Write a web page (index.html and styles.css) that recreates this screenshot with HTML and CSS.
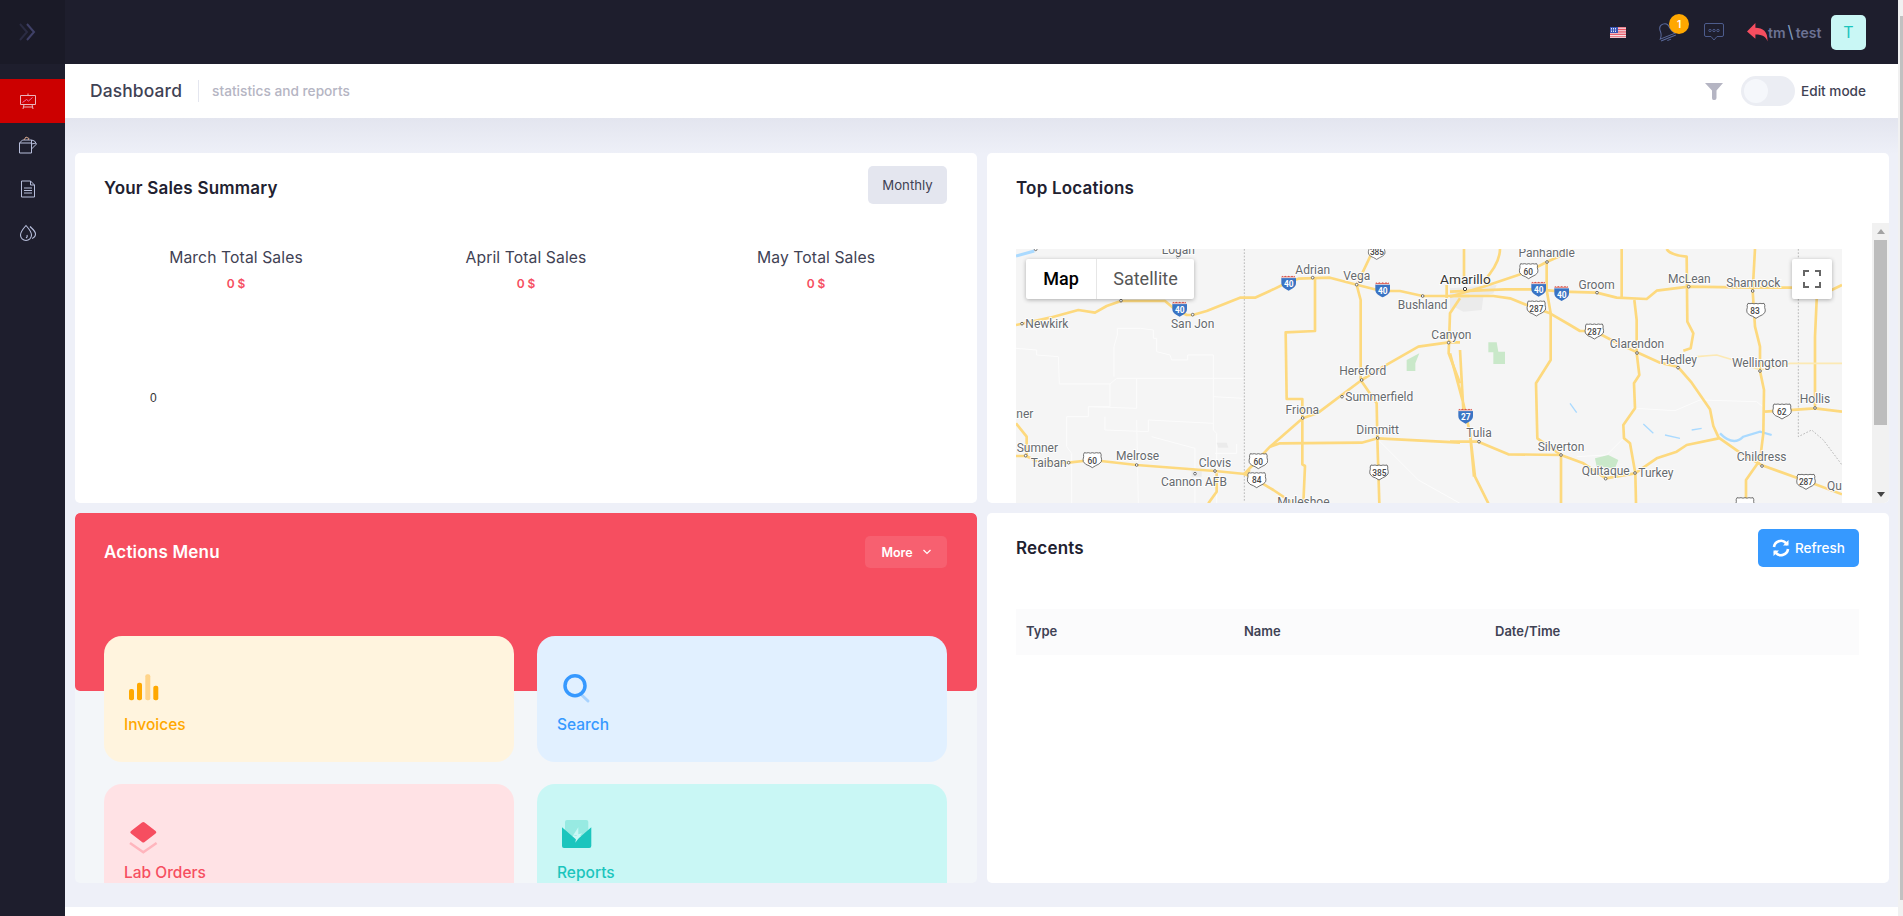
FILE: index.html
```html
<!DOCTYPE html>
<html lang="en">
<head>
	<meta charset="UTF-8">
	<meta name="viewport" content="width=device-width">
	<title>Dashboard</title>
	<link rel="stylesheet" href="styles.css">
</head>
<body>
<aside class="side">
	<div class="brand">
		<svg width="18" height="18" viewBox="0 0 18 18" fill="none" stroke-width="2">
			<path d="M1 1l7 8-7 8" stroke="#2a2b42"/>
			<path d="M8 1l7 8-7 8" stroke="#3f4067"/>
		</svg>
	</div>
	<nav class="nav">
		<a class="nav-item active">
			<svg width="18" height="18" viewBox="0 0 18 18" fill="none" stroke="#eab4bb">
				<path d="M1.5 3.5h15v9h-15zM9 3.5v-2M5 12.5l-1 4.5M13 12.5l1 4.500M4.500 15h9"/>
				<path d="M3.5 10.500l4-3 2 1.500 4-3.500" stroke="#f06aa8"/>
			</svg>
		</a>
		<a class="nav-item">
			<svg width="18" height="18" viewBox="0 0 18 18" fill="none" stroke="#b7bedb">
				<path d="M.5 7h12v10H.5zM.5 7l3-3h9v3M12.5 8l4.500-1M12.500 13l5-5-2-3-3-1"/>
				<path d="M5 4l2-3 3 1.500L9 4" stroke="#d8a98f"/>
			</svg>
		</a>
		<a class="nav-item">
			<svg width="16" height="18" viewBox="0 0 16 18" fill="none" stroke="#b7bedb">
				<path d="M1.500 1h9l4 4v12h-13zM10.500 1v4h4M4 8h8M4 10.500h8M4 13h8"/>
			</svg>
		</a>
		<a class="nav-item">
			<svg width="18" height="18" viewBox="0 0 18 18" fill="none" stroke="#b7bedb" stroke-width="1.100">
				<path d="M7 1.500c3 3.500 5.500 6 5.500 9.500a5.500 5.500 0 0 1-11 0c0-3.500 2.500-6 5.500-9.500z"/>
				<path d="M11 2.500c2.500 2.500 5.500 4.500 5.500 7.500 0 2-1.200 3.600-3.400 4.500M7 14c1-.5 1.500-1.500 1-3"/>
			</svg>
		</a>
	</nav>
</aside>

<div class="main">
	<header class="top">
		<svg class="flag" width="16" height="11" viewBox="0 0 16 11">
			<rect width="16" height="11" fill="#f4f4f8"/>
			<path d="M0 .8h16M0 2.500h16M0 4.200h16M0 5.900h16M0 7.600h16M0 9.800h16" stroke="#e8404f" stroke-width=".9"/>
			<rect width="8" height="6" fill="#3a55b4"/>
			<path d="M1 1.500h6M1 3h6M1 4.500h6" stroke="#dfe4f6" stroke-dasharray="1 1"/>
		</svg>
		<div class="bell">
			<svg width="20" height="20" viewBox="0 0 20 20" fill="none" stroke="#5a6a9c">
				<g transform="rotate(-22 10 10)">
					<path d="M10 1.500c-3.500 0-5 2.500-5 6 0 4-1.500 5.500-3 7h16c-1.500-1.500-3-3-3-7 0-3.500-1.500-6-5-6z"/>
					<path d="M2 16.500h16M8 18.500h4"/>
				</g>
			</svg>
			<span class="badge">1</span>
		</div>
		<svg class="chat" width="20" height="18" viewBox="0 0 20 18" fill="none" stroke="#4d5c8c">
			<path d="M2 .5h16a1.500 1.500 0 0 1 1.500 1.500v10a1.500 1.500 0 0 1-1.500 1.500h-5l-3 3.500-3-3.500H2A1.500 1.500 0 0 1 .5 12V2A1.500 1.500 0 0 1 2 .5z"/>
			<circle cx="6" cy="7.500" r="1.200"/><circle cx="10" cy="7.500" r="1.200"/><circle cx="14" cy="7.500" r="1.200"/>
		</svg>
		<svg class="reply" width="21" height="19" viewBox="0 0 20 18">
			<path d="M0 8l8-8v4.500c7 0 12 3.500 11.500 13-1.200-4-4.500-6.500-11.500-6.500V15z" fill="#f64e60"/>
		</svg>
		<span class="user">tm<i>\</i>test</span>
		<span class="avatar">T</span>
	</header>

	<div class="sub">
		<span class="sub-title">Dashboard</span>
		<span class="sub-note">statistics and reports</span>
		<svg class="funnel" width="18" height="17" viewBox="0 0 18 17"><path d="M0 0h18l-6.500 7.500V15q0 2-2 2h-1q-1.500 0-1.500-2V7.500z" fill="#b5b5c3"/></svg>
		<span class="switch"><i></i></span>
		<span class="edit">Edit mode</span>
	</div>

	<div class="content">
		<section class="card sales">
			<div class="card-head">
				<h3>Your Sales Summary</h3>
				<button class="btn-grey">Monthly</button>
			</div>
			<div class="stats">
				<div><p>March Total Sales</p><b>0 $</b></div>
				<div><p>April Total Sales</p><b>0 $</b></div>
				<div><p>May Total Sales</p><b>0 $</b></div>
			</div>
			<div class="axis">0</div>
		</section>

		<section class="card locations">
			<div class="card-head"><h3>Top Locations</h3></div>
			<div class="map-scroll">
				<div class="map-wrap">
					<div class="map">
						<svg class="map-svg" width="826" height="254" viewBox="18 87 2478 762">
							<defs>
								<symbol id="i-shield" viewBox="0 0 46 48" overflow="visible">
									<path d="M1 8h44v16c0 12-12 18-22 23C13 42 1 36 1 24z" fill="#3a74c4"/>
									<path d="M1 8l2-6 5 3 5-3 5 3 5-3 5 3 5-3 5 3 3-3 2 6z" fill="#d9544a"/>
									<path d="M1 8h44" stroke="#fff" stroke-width="2"/>
								</symbol>
								<symbol id="us-shield" viewBox="0 0 60 50" overflow="visible">
									<path d="M6 3q6 2 12 0 6 3 12 0 6 3 12 0 6 2 12 0 4 6 2 12 3 8 1 15-6 8-17 12l-10 6-10-6Q9 40 3 30q-2-7 1-15-2-6 2-12z" fill="#fff" stroke="#555" stroke-width="2.500"/>
								</symbol>
							</defs>
							<rect x="18" y="87" width="2478" height="762" fill="#f5f5f5"/>

							<g fill="none" stroke="#fcfcfc" stroke-width="3">
								<path d="M18 385l62 5v15l65 5 3 82h152l20-17h380M312 470v-90l10-35v-20h70l38 5v25h10v40l40 10 5 15h48v-15h77v70M610 530l90 5M610 475v155l10 10v210M300 492v68h-65v30h-65v90l15 20v150M235 560l145 5v-90M285 590v40l130 5v-35l195 10M380 600l5 250M425 650l130 35v165M680 672v28h-65M1105 660l120 120 125 70"/>
								<path d="M1875 565l120 7 75-32 170 5 25 20M1840 655l-50 50-90 5"/>
							</g>

							<g fill="#ebebeb">
								<path d="M1320 205l140-10-10 25-30 10-5 40-55 5-25-13-15 8z"/>
								<path d="M620 668h30l5 15h-30zM545 750h30v20h-30z"/>
							</g>
							<g fill="#c9e8c9">
								<path d="M1190 420l38-20-12 30v23h-26z"/>
								<path d="M1435 367h25l5 28h20v37h-35v-35h-15z"/>
								<path d="M1755 715l40-10 30 15-10 25-55-5z"/>
							</g>
							<g fill="none" stroke="#aadaff" stroke-width="4">
								<path d="M18 108l55-15" stroke-width="9"/>
								<path d="M2130 640q40 40 70 10l50-15 35 10" stroke-width="7"/>
								<path d="M1900 612l30 28M1965 645l45 10M2045 630l30-5M1680 550l20 28"/>
							</g>
							<path d="M703 87v760" fill="none" stroke="#999" stroke-width="2" stroke-dasharray="5 5"/>
							<path d="M2365 87v563l40-20 35 30 56 75" fill="none" stroke="#999" stroke-width="2" stroke-dasharray="5 5"/>

							<g fill="none" stroke="#fdd97e" stroke-width="8" stroke-linejoin="round">
								<path d="M18 315l102-22 85-23 50 8 35-20 43-15h132l25 21 40 21h18l42-12 100-40h45l55-25 45-22 30-10 95-3 80 21 75 19h55l68 15h140"/>
								<path d="M1085 100l-45 95 12 45v240l48 70 2 105 6 195"/>
								<path d="M915 172v161l-88 4 3 200h47v196l8 5-5 112"/>
								<path d="M700 765l80-85 98-85 47-17 130-98 65-40 105-60 91-13h34"/>
								<path d="M780 680l30-10 245-2 48-13 247 13"/>
								<path d="M18 708h30l42 20h85l71-8 134 15 235 18 90 9 15-12"/>
								<path d="M705 762l35 18 50 30 60 40"/>
								<path d="M18 610l32 40v58M620 760v55l-25 35M1350 235l-30 45-4 120 34 90M1310 195v40"/>
							</g>
							<g fill="none" stroke="#fdd97e" stroke-width="8" stroke-linejoin="round" transform="translate(1320 0)">
								<path d="M0 215l165-7h100l70 7 105 3 60 15 90 4 30-25 96-12 192 3h118l119 7 31-15"/>
								<path d="M0 228h130l50 7 50 20 70 25 60 35 30 18h43l57 30 71 34 69 31 54 13 41 47 55 80 10 50 16 35 64 45 66 38 104 37 30 10 106 40"/>
								<path d="M42 87v93M150 87q0 43-50 98M370 90l-80 36-55 29-135 45-100 30"/>
								<path d="M290 126v84l12 70v140l-44 70 4 165 71 50v145"/>
								<path d="M515 87v148M650 87q10 18 60 23l2 195 18 35-8 45-22 7"/>
								<path d="M915 87l-7 126 7 107 15 60v73l12 57-2 130-10 80-42 60v60"/>
								<path d="M553 240l7 60v99l8 66-16 25 3 75-35 50 2 40 18 15 16 90 2 90"/>
								<path d="M0 665h85l90 38 158 2 67 25 67 45 88-15 65-45 60-20 30-20 96-20"/>
								<path d="M945 575l150-10 81 10M1095 565V350l5-110v-40"/>
								<path d="M0 400l40 150 20 90 15 130 40 80M30 390l10 180M60 640l12 130"/>
								<path d="M740 410l60-5 50 15 80 30 90-20h156" stroke="#fce9b4" stroke-width="5"/>
							</g>

							<g class="shields">
								<use href="#i-shield" x="813" y="165" width="46" height="48"/>
								<use href="#i-shield" x="1095" y="185" width="46" height="48"/>
								<use href="#i-shield" x="486" y="243" width="46" height="48"/>
								<use href="#i-shield" x="1563" y="183" width="46" height="48"/>
								<use href="#i-shield" x="1632" y="196" width="46" height="48"/>
								<use href="#i-shield" x="1344" y="564" width="46" height="48"/>
								<text class="i-num" x="836" y="202">40</text>
								<text class="i-num" x="1118" y="222">40</text>
								<text class="i-num" x="509" y="280">40</text>
								<text class="i-num" x="1586" y="220">40</text>
								<text class="i-num" x="1655" y="233">40</text>
								<text class="i-num" x="1367" y="601">27</text>

								<use href="#us-shield" x="217" y="695" width="60" height="50"/>
								<use href="#us-shield" x="715" y="698" width="60" height="50"/>
								<use href="#us-shield" x="710" y="755" width="60" height="50"/>
								<use href="#us-shield" x="1077" y="732" width="60" height="50"/>
								<use href="#us-shield" x="1070" y="75" width="60" height="45"/>
								<use href="#us-shield" x="1526" y="128" width="60" height="50"/>
								<use href="#us-shield" x="1549" y="240" width="60" height="50"/>
								<use href="#us-shield" x="1723" y="309" width="60" height="50"/>
								<use href="#us-shield" x="2208" y="247" width="60" height="50"/>
								<use href="#us-shield" x="2286" y="549" width="60" height="50"/>
								<use href="#us-shield" x="2358" y="760" width="60" height="50"/>
								<use href="#us-shield" x="2175" y="830" width="60" height="50"/>
								<text class="us-num" x="247" y="731">60</text>
								<text class="us-num" x="745" y="734">60</text>
								<text class="us-num" x="740" y="790">84</text>
								<text class="us-num" x="1108" y="768">385</text>
								<text class="us-num" x="1101" y="106">385</text>
								<text class="us-num" x="1555" y="164">60</text>
								<text class="us-num" x="1579" y="276">287</text>
								<text class="us-num" x="1753" y="345">287</text>
								<text class="us-num" x="2235" y="283">83</text>
								<text class="us-num" x="2315" y="585">62</text>
								<text class="us-num" x="2388" y="796">287</text>
							</g>

							<g fill="#fff" stroke="#555" stroke-width="2.500">
								<circle cx="77" cy="88" r="4"/><circle cx="503" cy="110" r="4"/><circle cx="36" cy="311" r="4"/>
								<circle cx="333" cy="242" r="4"/><circle cx="548" cy="284" r="4"/><circle cx="908" cy="173" r="4"/>
								<circle cx="1040" cy="194" r="4"/><circle cx="1238" cy="228" r="4"/><circle cx="1316" cy="368" r="4"/>
								<circle cx="1055" cy="480" r="4"/><circle cx="996" cy="530" r="4"/><circle cx="878" cy="594" r="4"/>
								<circle cx="1103" cy="654" r="4"/><circle cx="47" cy="707" r="4"/><circle cx="176" cy="728" r="4"/>
								<circle cx="380" cy="735" r="4"/><circle cx="615" cy="753" r="4"/><circle cx="555" cy="761" r="4"/>
								<circle cx="1365" cy="207" r="5" stroke="#222"/><circle cx="1611" cy="126" r="4"/><circle cx="1761" cy="218" r="4"/>
								<circle cx="2036" cy="200" r="4"/><circle cx="2228" cy="213" r="4"/><circle cx="1881" cy="399" r="4"/>
								<circle cx="2004" cy="443" r="4"/><circle cx="2250" cy="453" r="4"/><circle cx="2415" cy="564" r="4"/>
								<circle cx="1407" cy="665" r="4"/><circle cx="1653" cy="705" r="4"/><circle cx="1787" cy="776" r="4"/>
								<circle cx="1875" cy="759" r="4"/><circle cx="2256" cy="738" r="4"/>
							</g>

							<g class="lbl" transform="translate(0 3)">
								<text x="505" y="100" text-anchor="middle">Logan</text>
								<text x="46" y="322">Newkirk</text>
								<text x="548" y="320" text-anchor="middle">San Jon</text>
								<text x="908" y="158" text-anchor="middle">Adrian</text>
								<text x="1040" y="178" text-anchor="middle">Vega</text>
								<text x="1238" y="265" text-anchor="middle">Bushland</text>
								<text x="1264" y="355">Canyon</text>
								<text x="1058" y="463" text-anchor="middle">Hereford</text>
								<text x="1006" y="540">Summerfield</text>
								<text x="877" y="580" text-anchor="middle">Friona</text>
								<text x="1103" y="640" text-anchor="middle">Dimmitt</text>
								<text x="70" y="592" text-anchor="end">Tanner</text>
								<text x="82" y="692" text-anchor="middle">Sumner</text>
								<text x="116" y="739" text-anchor="middle">Taiban</text>
								<text x="383" y="718" text-anchor="middle">Melrose</text>
								<text x="615" y="737" text-anchor="middle">Clovis</text>
								<text x="552" y="796" text-anchor="middle">Cannon AFB</text>
								<text x="880" y="855" text-anchor="middle">Muleshoe</text>
								<text x="1610" y="109" text-anchor="middle">Panhandle</text>
								<text x="1760" y="205" text-anchor="middle">Groom</text>
								<text x="2038" y="187" text-anchor="middle">McLean</text>
								<text x="2230" y="198" text-anchor="middle">Shamrock</text>
								<text x="1881" y="382" text-anchor="middle">Clarendon</text>
								<text x="2006" y="430" text-anchor="middle">Hedley</text>
								<text x="2250" y="437" text-anchor="middle">Wellington</text>
								<text x="2415" y="547" text-anchor="middle">Hollis</text>
								<text x="1653" y="691" text-anchor="middle">Silverton</text>
								<text x="1407" y="649" text-anchor="middle">Tulia</text>
								<text x="1787" y="763" text-anchor="middle">Quitaque</text>
								<text x="1885" y="769">Turkey</text>
								<text x="2255" y="721" text-anchor="middle">Childress</text>
								<text x="2451" y="808">Quanah</text>
								<text class="lbl-big" x="1290" y="188">Amarillo</text>
							</g>
						</svg>
						<div class="map-type">
							<span class="on">Map</span>
							<span>Satellite</span>
						</div>
						<div class="map-full">
							<svg width="18" height="18" viewBox="0 0 18 18" fill="none" stroke="#666" stroke-width="2"><path d="M1 6V1h5M12 1h5v5M17 12v5h-5M6 17H1v-5"/></svg>
						</div>
					</div>
				</div>
				<div class="fake-bar">
					<span class="arrow-up"></span>
					<span class="fake-thumb"></span>
					<span class="arrow-down"></span>
				</div>
			</div>
		</section>

		<section class="card actions">
			<div class="actions-band">
				<h3>Actions Menu</h3>
				<button class="btn-more">More
					<svg width="8" height="6" viewBox="0 0 8 6" fill="none" stroke="#fff" stroke-width="1.200"><path d="M.5 1L4 4.500 7.500 1"/></svg>
				</button>
			</div>
			<div class="tiles">
				<a class="tile t-yellow">
					<svg width="36" height="36" viewBox="0 0 36 36">
						<rect x="5" y="17" width="5" height="11.300" rx="2" fill="#ffa800"/>
						<rect x="13" y="10.700" width="5" height="17.600" rx="2" fill="#ffa800"/>
						<rect x="21.300" y="2.300" width="5" height="26" rx="2" fill="#ffd48a"/>
						<rect x="29.300" y="13.700" width="5" height="14.600" rx="2" fill="#ffa800"/>
					</svg>
					<span>Invoices</span>
				</a>
				<a class="tile t-blue">
					<svg width="36" height="36" viewBox="0 0 36 36" fill="none">
						<path d="M24.700 23l6.300 6" stroke="#a8d3ff" stroke-width="3" stroke-linecap="round"/>
						<circle cx="18" cy="13.700" r="10" stroke="#3699ff" stroke-width="3.500"/>
					</svg>
					<span>Search</span>
				</a>
				<a class="tile t-pink">
					<svg width="36" height="36" viewBox="0 0 36 36" fill="none">
						<path d="M6 23l13.300 9.300L32.600 23" stroke="#ffb5bd" stroke-width="2.500"/>
						<path d="M18 2.500a2 2 0 0 1 2.600 0l11 8.500a1.500 1.500 0 0 1 0 2.400l-11 8.500a2 2 0 0 1-2.600 0l-11-8.500a1.500 1.500 0 0 1 0-2.400z" fill="#f64e60"/>
					</svg>
					<span>Lab Orders</span>
				</a>
				<a class="tile t-teal">
					<svg width="36" height="36" viewBox="0 0 36 36">
						<rect x="8" y="0" width="23.300" height="16" rx="2" fill="#97eae2"/>
						<path d="M5 7.300L19.700 20 34.300 7.300V26a2 2 0 0 1-2 2H7a2 2 0 0 1-2-2z" fill="#1bc5bd"/>
						<path d="M21.300 7.300L15.700 16l4-1-1.400 7.700L25 13.300l-3.700 1z" fill="#c9f7f5"/>
					</svg>
					<span>Reports</span>
				</a>
			</div>
		</section>

		<section class="card recents">
			<div class="recents-head">
				<h3>Recents</h3>
				<button class="btn-blue">
					<svg width="18" height="18" viewBox="0 0 18 18" fill="none" stroke="#fff" stroke-width="2.600">
						<path d="M2 8a7 7 0 0 1 12-4l1.500 1.500M16 10a7 7 0 0 1-12 4l-1.500-1.500"/>
						<path d="M16.500 1v5.500H11z M1.500 17v-5.500H7z" fill="#fff" stroke="none"/>
					</svg>
					Refresh
				</button>
			</div>
			<table class="recents-table">
				<tr><th class="c-type">Type</th><th class="c-name">Name</th><th>Date/Time</th></tr>
			</table>
		</section>
	</div>
	<div class="foot"></div>
</div>

<div class="page-bar"><span></span></div>
</body>
</html>
```

FILE: styles.css
```css
* { box-sizing: border-box; }
html, body { height: 100%; }
body {
	margin: 0;
	display: flex;
	height: 916px;
	overflow: hidden;
	background: #fff;
	color: #3f4254;
	font-family: Inter, "Liberation Sans", sans-serif;
}
h3, p { margin: 0; }
button { border: none; font-family: inherit; }

/* sidebar */
.side { width: 65px; flex: none; background: #1e1e2d; }
.brand {
	height: 64px;
	display: flex;
	align-items: center;
	padding-left: 19px;
	background: #1a1a27;
}
.nav { padding-top: 15px; }
.nav-item {
	height: 44px;
	display: flex;
	align-items: center;
	justify-content: center;
	padding-right: 9px;
}
.nav-item.active { background: #cc0000; }

/* top bar */
.main { flex: 1; min-width: 0; display: flex; flex-direction: column; }
.top {
	height: 64px;
	flex: none;
	display: flex;
	align-items: center;
	padding-right: 32px;
	background: #1e1e2d;
}
.flag { margin-left: auto; }
.bell { position: relative; height: 20px; margin-left: 30px; }
.badge {
	position: absolute;
	left: 13px;
	top: -8px;
	width: 20px;
	height: 20px;
	border-radius: 50%;
	background: #ffa800;
	color: #fff;
	font-size: 10px;
	font-weight: 600;
	line-height: 20px;
	text-align: center;
}
.chat { margin-left: 28px; }
.reply { margin-left: 23px; }
.user { width: 52px; font-size: 14px; font-weight: 600; color: #6c7293; white-space: nowrap; }
.user i { margin: 0 2px; font-style: normal; font-size: 17px; font-weight: 400; color: #7f9cc0; }
.avatar {
	width: 35px;
	height: 35px;
	margin-left: 11px;
	border-radius: 5px;
	background: #c9f7f5;
	color: #1bc5bd;
	font-size: 16px;
	line-height: 35px;
	text-align: center;
}

/* sub header */
.sub {
	height: 54px;
	flex: none;
	display: flex;
	align-items: center;
	padding: 0 32px 0 25px;
	background: #fff;
}
.sub-title { padding-right: 16px; border-right: 1px solid #e4e6ef; font-size: 17.4px; font-weight: 500; line-height: 22px; letter-spacing: .15px; }
.sub-note { margin-left: 13px; color: #b5b5c3; font-size: 13.7px; font-weight: 500; }
.funnel { margin-left: auto; }
.switch { width: 54px; height: 30px; margin-left: 18px; padding: 3px; border-radius: 15px; background: #ebedf3; }
.switch i { display: block; width: 24px; height: 24px; border-radius: 50%; background: #f5f7fb; }
.edit { margin-left: 6px; font-size: 13.6px; font-weight: 500; white-space: nowrap; }

/* grid of cards */
.content {
	height: 789px;
	display: grid;
	grid-template-columns: 902px 902px;
	grid-template-rows: 350px 370px;
	gap: 10px;
	padding: 35px 9px 0 10px;
	background: linear-gradient(#e3e5ef, #eef0f8 36px);
}
.foot { flex: 1; background: #fff; }
.card { overflow: hidden; border-radius: 5px; background: #fff; }
.card h3 { font-size: 17px; font-weight: 600; letter-spacing: .2px; line-height: 20px; color: #212130; }

.card-head { display: flex; justify-content: space-between; height: 70px; padding: 25px 30px 0 29px; }
.btn-grey { width: 79px; height: 38px; margin-top: -12px; border-radius: 5px; background: #e4e6ef; color: #3f4254; font-size: 13.2px; }

/* sales */
.stats { display: grid; grid-template-columns: repeat(3, 290px); padding: 25px 0 0 16px; text-align: center; }
.stats p { font-size: 15.7px; line-height: 20px; letter-spacing: .1px; }
.stats b { display: block; margin-top: 7px; color: #f64e60; font-size: 12px; font-weight: 600; line-height: 18px; }
.axis { margin: 96px 0 0 75px; color: #333; font-size: 12px; font-family: "Liberation Sans", sans-serif; line-height: 18px; }

/* map */
.map-scroll { display: flex; height: 280px; padding-left: 29px; }
.map-wrap { flex: 1; padding: 26px 30px 0 0; overflow: hidden; }
.map { position: relative; height: 254px; overflow: hidden; }
.map-svg { display: block; }
.map-svg text { font-family: Roboto, sans-serif; }
.lbl text {
	font-size: 36px;
	fill: #666a6e;
	stroke: #fff;
	stroke-width: 5px;
	paint-order: stroke;
}
.lbl .lbl-big { font-size: 41px; fill: #333; }
.i-num { font-size: 25px; font-weight: 700; fill: #fff; text-anchor: middle; }
.us-num { font-size: 25px; font-weight: 500; fill: #444; text-anchor: middle; }
.map-type {
	position: absolute;
	left: 10px;
	top: 10px;
	display: flex;
	width: 168px;
	height: 40px;
	border-radius: 2px;
	background: #fff;
	box-shadow: 0 1px 4px rgba(0, 0, 0, .3);
	color: #565656;
	font-family: Roboto, sans-serif;
	font-size: 18px;
	line-height: 40px;
	text-align: center;
}
.map-type span { flex: 1; }
.map-type span + span { border-left: 1px solid #e6e6e6; }
.map-type .on { flex: 0 0 70px; color: #000; font-weight: 500; }
.map-full {
	position: absolute;
	right: 10px;
	top: 10px;
	width: 40px;
	height: 40px;
	padding: 11px;
	border-radius: 2px;
	background: #fff;
	box-shadow: 0 1px 4px rgba(0, 0, 0, .3);
}
.map-full svg { display: block; }

.fake-bar {
	width: 17px;
	flex: none;
	display: flex;
	flex-direction: column;
	align-items: center;
	background: #f1f1f1;
}
.arrow-up { margin-top: 6px; border: 4px solid transparent; border-top: 0; border-bottom: 5px solid #a3a3a3; }
.fake-thumb { width: 13px; height: 185px; margin-top: 6px; background: #bdbdbd; }
.arrow-down { margin-top: auto; margin-bottom: 6px; border: 4px solid transparent; border-bottom: 0; border-top: 5px solid #444; }

/* actions */
.actions { background: #f3f6f9; }
.actions-band {
	height: 178px;
	display: flex;
	justify-content: space-between;
	padding: 23px 30px 0 29px;
	border-radius: 5px;
	background: #f64e60;
}
.card .actions-band h3 { padding-top: 6px; color: #fff; }
.btn-more {
	display: flex;
	align-items: center;
	justify-content: center;
	gap: 10px;
	width: 82px;
	height: 32px;
	border-radius: 5px;
	background: rgba(255, 255, 255, .1);
	color: #fff;
	font-size: 12.5px;
	font-weight: 600;
}
.tiles {
	display: grid;
	grid-template-columns: 410px 410px;
	grid-auto-rows: 126px;
	gap: 22px 23px;
	margin: -55px 0 0 29px;
}
.tile { display: block; padding: 36px 20px 0; border-radius: 18px; }
.tile svg { display: block; }
.tile span { display: block; margin-top: 6px; font-size: 15.5px; font-weight: 500; line-height: 22px; }
.t-yellow { background: #fff4de; color: #ffa800; }
.t-blue { background: #e1f0ff; color: #3699ff; }
.t-pink { background: #ffe2e5; color: #f64e60; }
.t-teal { background: #c9f7f5; color: #1bc5bd; }

/* recents */
.recents-head { display: flex; justify-content: space-between; align-items: center; padding: 16px 30px 0 29px; }
.btn-blue {
	display: flex;
	align-items: center;
	gap: 5px;
	width: 101px;
	height: 38px;
	padding-left: 14px;
	border-radius: 5px;
	background: #3699ff;
	color: #fff;
	font-size: 13.5px;
	font-weight: 500;
}
.recents-table { width: 843px; margin: 42px 0 0 29px; border-collapse: collapse; }
.recents-table th { height: 46px; padding: 0 10px 2px; background: #fbfbfc; font-size: 13px; font-weight: 600; text-align: left; }
.c-type { width: 218px; }
.c-name { width: 251px; }

/* page scrollbar, cut by the window edge */
.page-bar { width: 5px; flex: none; padding: 16px 0 16px 2px; background: #f1f1f1; }
.page-bar span { display: block; height: 100%; background: #c1c1c1; }
```
